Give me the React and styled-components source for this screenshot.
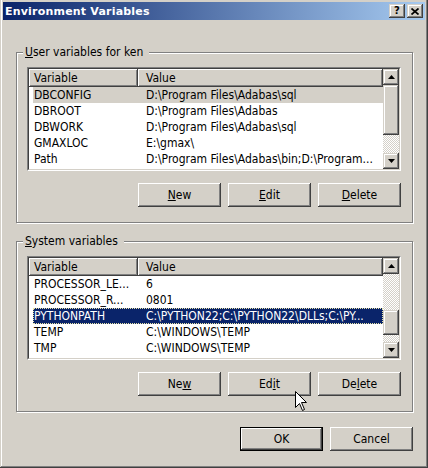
import React from "react";
import styled, { createGlobalStyle } from "styled-components";

const userVars = [
  ["DBCONFIG", "D:\\Program Files\\Adabas\\sql"],
  ["DBROOT", "D:\\Program Files\\Adabas"],
  ["DBWORK", "D:\\Program Files\\Adabas\\sql"],
  ["GMAXLOC", "E:\\gmax\\"],
  ["Path", "D:\\Program Files\\Adabas\\bin;D:\\Program..."],
];

const systemVars = [
  ["PROCESSOR_LE...", "6"],
  ["PROCESSOR_R...", "0801"],
  ["PYTHONPATH", "C:\\PYTHON22;C:\\PYTHON22\\DLLs;C:\\PY..."],
  ["TEMP", "C:\\WINDOWS\\TEMP"],
  ["TMP", "C:\\WINDOWS\\TEMP"],
];

export default function App() {
  return (
    <>
      <GlobalStyle />
      <Window>
        <TitleBar>
          <TitleText>Environment Variables</TitleText>
          <CaptionButtons>
            <CaptionButton>?</CaptionButton>
            <CaptionButton>
              <svg width="8" height="7" viewBox="0 0 8 7">
                <path d="M0.5 0.5 L7.5 6.5 M7.5 0.5 L0.5 6.5" stroke="#000" strokeWidth="1.7" />
              </svg>
            </CaptionButton>
          </CaptionButtons>
        </TitleBar>

        <Body>
          <VarGroup
            title={<><u>U</u>ser variables for ken</>}
            rows={userVars}
            selected={0}
            active={false}
            thumbTop={0}
            thumbHeight={50}
            buttons={[<><u>N</u>ew</>, <><u>E</u>dit</>, <><u>D</u>elete</>]}
          />
          <VarGroup
            $gap={18}
            title={<><u>S</u>ystem variables</>}
            rows={systemVars}
            selected={2}
            active={true}
            thumbTop={36}
            thumbHeight={25}
            buttons={[<>Ne<u>w</u></>, <>Ed<u>i</u>t</>, <>De<u>l</u>ete</>]}
          />

          <Footer>
            <PushButton $default>OK</PushButton>
            <PushButton>Cancel</PushButton>
          </Footer>
        </Body>

        <Cursor width="13" height="21" viewBox="0 0 13 21">
          <path d="M0.5 0.5 L0.5 16.5 L4.5 12.5 L7.5 19.5 L9.5 18.5 L6.5 11.5 L11.5 11.5 Z" fill="#fff" stroke="#000" strokeWidth="1" />
        </Cursor>
      </Window>
    </>
  );
}

function VarGroup({ title, rows, selected, active, thumbTop, thumbHeight, buttons, $gap }) {
  return (
    <GroupBox $gap={$gap}>
      <Legend>{title}</Legend>
      <ListView>
        <ListInner>
          <ListBody>
            <HeaderRow>
              <HeaderCell $width={109} $pad={5}>Variable</HeaderCell>
              <HeaderCell $pad={8}>Value</HeaderCell>
            </HeaderRow>
            {rows.map(([name, value], i) => (
              <Row key={name} $selected={i === selected} $active={active}>
                <NameCell>{name}</NameCell>
                <ValueCell>{value}</ValueCell>
              </Row>
            ))}
          </ListBody>
          <ScrollBar>
            <ScrollArrow>
              <svg width="7" height="4" viewBox="0 0 7 4"><path d="M3.5 0 L7 4 L0 4 Z" fill="#000" /></svg>
            </ScrollArrow>
            <Track>
              <Thumb style={{ marginTop: thumbTop, height: thumbHeight }} />
            </Track>
            <ScrollArrow>
              <svg width="7" height="4" viewBox="0 0 7 4"><path d="M0 0 L7 0 L3.5 4 Z" fill="#000" /></svg>
            </ScrollArrow>
          </ScrollBar>
        </ListInner>
      </ListView>
      <ButtonRow>
        {buttons.map((b, i) => (
          <PushButton key={i}>{b}</PushButton>
        ))}
      </ButtonRow>
    </GroupBox>
  );
}

// ______________________________________ STYLED COMPONENTS
const GlobalStyle = createGlobalStyle`
  html, body {
    margin: 0;
    padding: 0;
    background: #D4D0C8;
  }
  body {
    font-family: "DejaVu Sans Condensed", "Liberation Sans", Arial, sans-serif;
    font-size: 12px;
    color: #000;
  }
`;

const raised = `
  background: #D4D0C8;
  box-shadow: inset -1px -1px #404040, inset 1px 1px #D4D0C8,
    inset -2px -2px #808080, inset 2px 2px #ffffff;
`;

const Window = styled.div`
  position: relative;
  width: 428px;
  height: 468px;
  box-sizing: border-box;
  padding: 2px 3px 3px 3px;
  background: #D4D0C8;
  box-shadow: inset -1px -1px #404040, inset 1px 0 #D4D0C8,
    inset -2px -2px #808080, inset 2px 0 #ffffff;
  display: flex;
  flex-direction: column;
  overflow: hidden;
`;

const TitleBar = styled.div`
  height: 18px;
  display: flex;
  align-items: center;
  justify-content: space-between;
  padding: 0 2px 0 2px;
  background: linear-gradient(to right, #0A246A, #A6CAF0);
  color: #fff;
`;

const TitleText = styled.span`
  font-family: "DejaVu Sans", Verdana, sans-serif;
  font-weight: bold;
  font-size: 11px;
  letter-spacing: 0.2px;
`;

const CaptionButtons = styled.div`
  display: flex;
  gap: 2px;
`;

const CaptionButton = styled.div`
  ${raised}
  width: 16px;
  height: 14px;
  display: flex;
  align-items: center;
  justify-content: center;
  color: #000;
  font-family: "DejaVu Sans", sans-serif;
  font-weight: bold;
  font-size: 10px;
  line-height: 14px;
`;

const Body = styled.div`
  display: flex;
  flex-direction: column;
  padding: 32px 12px 0 13px;
`;

const GroupBox = styled.div`
  position: relative;
  margin-top: ${(p) => p.$gap || 0}px;
  border: 1px solid #808080;
  box-shadow: 1px 1px 0 #ffffff, inset 1px 1px 0 #ffffff;
  padding: 14px 11px 15px 10px;
  display: flex;
  flex-direction: column;
  row-gap: 12px;
`;

const Legend = styled.div`
  position: absolute;
  top: -8px;
  left: 6px;
  padding: 0 6px 0 2px;
  background: #D4D0C8;
  line-height: 14px;
`;

const ListView = styled.div`
  height: 104px;
  box-sizing: border-box;
  border: 1px solid;
  border-color: #808080 #ffffff #ffffff #808080;
`;

const ListInner = styled.div`
  height: 100%;
  box-sizing: border-box;
  border: 1px solid;
  border-color: #404040 #D4D0C8 #D4D0C8 #404040;
  background: #fff;
  display: flex;
  overflow: hidden;
`;

const ListBody = styled.div`
  flex: 1;
  min-width: 0;
  display: flex;
  flex-direction: column;
  overflow: hidden;
`;

const HeaderRow = styled.div`
  display: flex;
  height: 18px;
  flex-shrink: 0;
`;

const HeaderCell = styled.div`
  ${raised}
  box-shadow: inset -1px -1px #404040, inset 1px 1px #ffffff, inset -2px -2px #808080;
  box-sizing: border-box;
  ${(p) => (p.$width ? `width: ${p.$width}px; flex-shrink: 0;` : `flex: 1;`)}
  padding-left: ${(p) => p.$pad}px;
  line-height: 18px;
`;

const Row = styled.div`
  display: flex;
  flex-shrink: 0;
  height: 16px;
  line-height: 16px;
  margin-left: 4px;
  white-space: nowrap;
  box-sizing: border-box;
  background: ${(p) => (p.$selected ? (p.$active ? "#0A246A" : "#D4D0C8") : "transparent")};
  color: ${(p) => (p.$selected && p.$active ? "#fff" : "#000")};
  outline: ${(p) => (p.$selected && p.$active ? "1px dotted #e8e4a8" : "none")};
  outline-offset: -1px;
`;

const NameCell = styled.div`
  width: 104px;
  flex-shrink: 0;
  padding-left: 1px;
  box-sizing: border-box;
  overflow: hidden;
`;

const ValueCell = styled.div`
  flex: 1;
  padding-left: 9px;
  overflow: hidden;
`;

const ScrollBar = styled.div`
  width: 16px;
  flex-shrink: 0;
  display: flex;
  flex-direction: column;
`;

const ScrollArrow = styled.div`
  ${raised}
  height: 16px;
  flex-shrink: 0;
  display: flex;
  align-items: center;
  justify-content: center;
`;

const Track = styled.div`
  flex: 1;
  display: flex;
  flex-direction: column;
  background-image: conic-gradient(#ffffff 25%, #D4D0C8 0 50%, #ffffff 0 75%, #D4D0C8 0);
  background-size: 2px 2px;
`;

const Thumb = styled.div`
  ${raised}
  flex-shrink: 0;
`;

const ButtonRow = styled.div`
  display: flex;
  justify-content: flex-end;
  gap: 7px;
`;

const PushButton = styled.button`
  width: 83px;
  height: 24px;
  box-sizing: border-box;
  padding: 0;
  font-family: inherit;
  font-size: 12px;
  color: #000;
  background: #D4D0C8;
  border: ${(p) => (p.$default ? "1px solid #000" : "none")};
  box-shadow: inset -1px -1px #404040, inset 1px 1px #ffffff,
    inset -2px -2px #808080, inset 2px 2px #D4D0C8;
`;

const Footer = styled.div`
  display: flex;
  justify-content: flex-end;
  gap: 7px;
  margin-top: 15px;
`;

const Cursor = styled.svg`
  position: absolute;
  left: 295px;
  top: 391px;
`;
